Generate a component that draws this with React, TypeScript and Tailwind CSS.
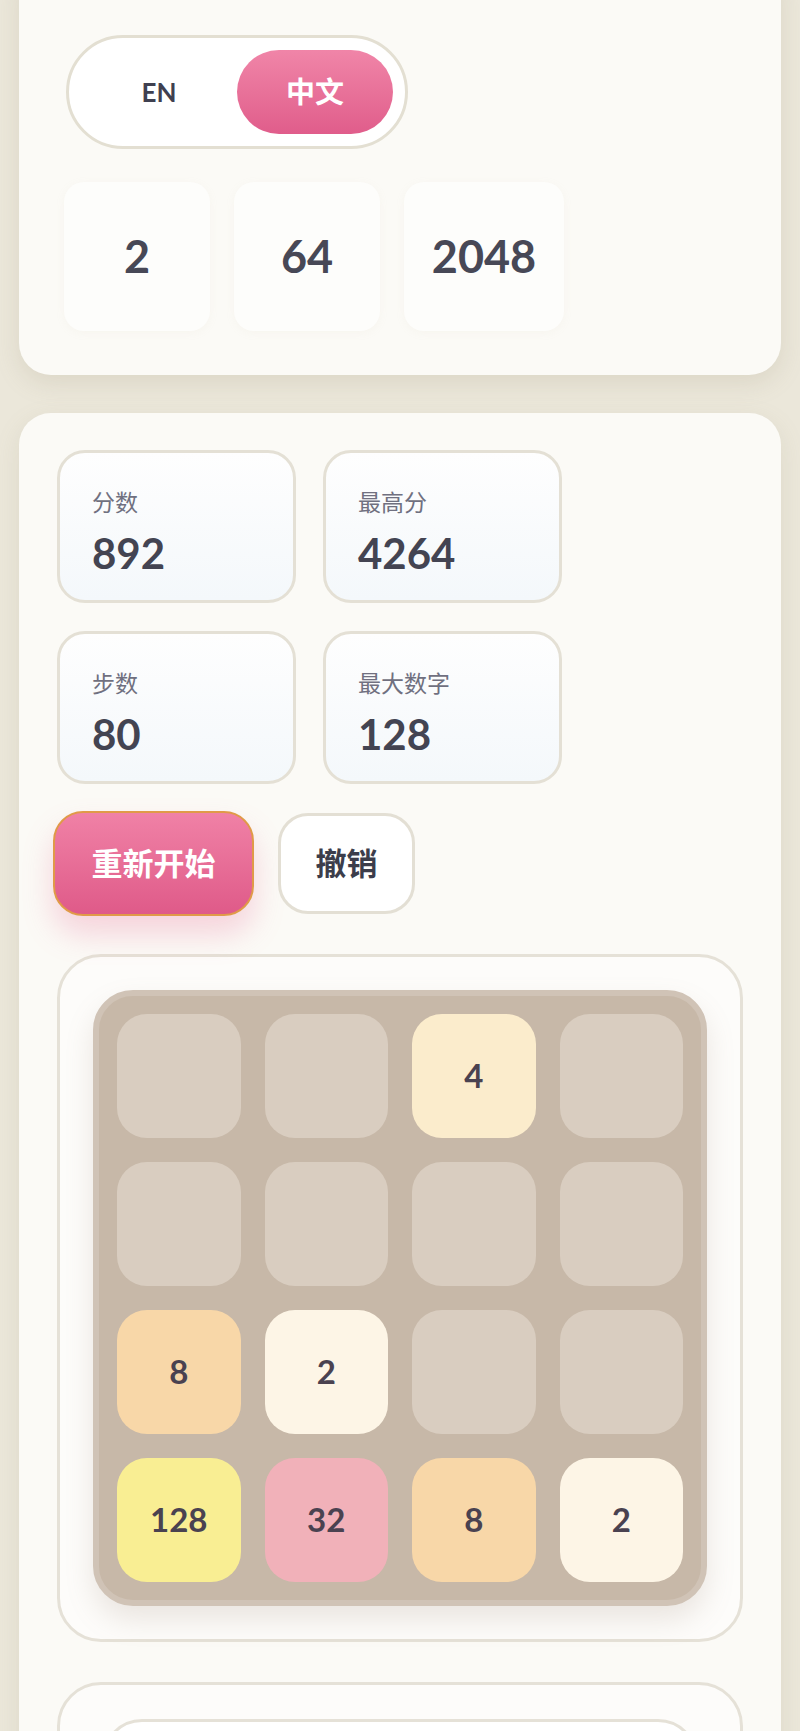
const FONT = "font-['Lato','Noto_Sans_CJK_SC',sans-serif]";

type Cell = number | null;

const BOARD: Cell[][] = [
  [null, null, 4, null],
  [null, null, null, null],
  [8, 2, null, null],
  [128, 32, 8, 2],
];

const TILE_BG: Record<number, string> = {
  2: "bg-[#fdf5e6]",
  4: "bg-[#fbeccc]",
  8: "bg-[#f8d7a8]",
  32: "bg-[#f1b1b9]",
  128: "bg-[#f9ee93]",
};

function Stat({ label, value }: { label: string; value: string }) {
  return (
    <div className="w-[239px] h-[153px] rounded-[28px] border-[3px] border-[#e4e0d5] bg-gradient-to-b from-[#fefefe] to-[#f4f8fb] pl-[32px] pt-[36px]">
      <div className="text-[23px] leading-[26px] text-[#707080]">{label}</div>
      <div className="mt-[16px] text-[42px] leading-[44px] font-bold text-[#434452]">{value}</div>
    </div>
  );
}

export default function App() {
  return (
    <div className={`min-h-screen bg-[#ebe7da] ${FONT} overflow-hidden`}>
      <div className="mx-[19px] -mt-[40px] rounded-[32px] bg-[#fbfaf6] shadow-[0_8px_24px_rgba(150,140,110,0.18)] pl-[47px] pr-[40px] pt-[75px] pb-[44px]">
        <div className="inline-flex rounded-full border-[3px] border-[#e3dfd2] bg-white p-[12px]">
          <button className="w-[156px] h-[84px] rounded-full text-[26px] font-bold text-[#3f4050]">EN</button>
          <button className="w-[156px] h-[84px] rounded-full bg-gradient-to-b from-[#f085a8] to-[#e05d8b] text-[29px] font-bold text-white">
            中文
          </button>
        </div>
        <div className="mt-[33px] -ml-[2px] flex gap-[24px]">
          {["2", "64", "2048"].map((n, i) => (
            <div
              key={n}
              className={`${i === 2 ? "w-[160px]" : "w-[146px]"} h-[149px] rounded-[20px] bg-[#fdfdfb] shadow-[0_2px_10px_rgba(200,190,160,0.07)] flex items-center justify-center text-[45px] font-bold text-[#474856]`}
            >
              {n}
            </div>
          ))}
        </div>
      </div>

      <div className="mx-[19px] mt-[38px] rounded-[32px] bg-[#fbfaf6] px-[38px] pt-[37px] pb-[60px] shadow-[0_8px_24px_rgba(150,140,110,0.15)]">
        <div className="grid grid-cols-[239px_239px] gap-x-[27px] gap-y-[28px]">
          <Stat label="分数" value="892" />
          <Stat label="最高分" value="4264" />
          <Stat label="步数" value="80" />
          <Stat label="最大数字" value="128" />
        </div>

        <div className="mt-[27px] -ml-[4px] flex items-center gap-[24px]">
          <button className="w-[201px] h-[105px] rounded-[30px] border-2 border-[#e09a48] bg-gradient-to-b from-[#f081a6] to-[#df5a89] text-[31px] font-bold text-white shadow-[0_18px_30px_rgba(232,110,150,0.28)]">
            重新开始
          </button>
          <button className="w-[137px] h-[101px] rounded-[30px] border-[3px] border-[#e3dfd4] bg-white text-[31px] font-bold text-[#3c3d4b]">
            撤销
          </button>
        </div>

        <div className="mt-[38px] rounded-[44px] border-[3px] border-[#e5e1d7] bg-[#fdfcfa] p-[33px]">
          <div className="rounded-[40px] border-[6px] border-[#d0c3b6] bg-[#c7b8a8] p-[18px] grid grid-cols-4 gap-[24px] shadow-[0_14px_28px_rgba(150,130,110,0.18)]">
            {BOARD.flat().map((v, i) => (
              <div
                key={i}
                className={`h-[124px] rounded-[30px] flex items-center justify-center text-[33px] font-bold text-[#4a4250] ${
                  v ? TILE_BG[v] : "bg-[#d9cdc0]"
                }`}
              >
                {v ?? ""}
              </div>
            ))}
          </div>
        </div>

        <div className="mt-[40px] rounded-[44px] border-[3px] border-[#e5e1d7] bg-[#fdfcfa] px-[42px] pt-[34px] pb-[40px]">
          <div className="h-[120px] rounded-[40px] border-[3px] border-[#e5e1d7] bg-white" />
        </div>
      </div>
    </div>
  );
}
